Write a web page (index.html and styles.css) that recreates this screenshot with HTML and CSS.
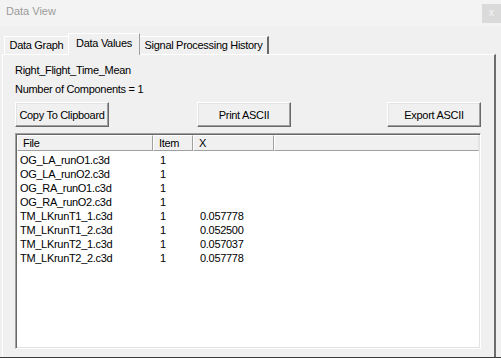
FILE: index.html
```html
<!DOCTYPE html>
<html>

<head>
    <title>Data View</title>
    <link rel="stylesheet" href="styles.css">
</head>

<body>
    <div class="window">
        <div class="titlebar">
            <span class="title">Data View</span>
            <span class="close">x</span>
        </div>

        <div class="tabs">
            <div class="tab tab-graph">Data Graph</div>
            <div class="tab tab-values active">Data Values</div>
            <div class="tab tab-history">Signal Processing History</div>
        </div>

        <div class="panel">
            <div class="label">Right_Flight_Time_Mean</div>
            <div class="label">Number of Components = 1</div>

            <div class="buttons">
                <button class="btn">Copy To Clipboard</button>
                <button class="btn btn-print">Print ASCII</button>
                <button class="btn btn-export">Export ASCII</button>
            </div>

            <div class="list">
                <div class="list-head">
                    <div class="col">File</div>
                    <div class="col">Item</div>
                    <div class="col">X</div>
                    <div class="col col-last"></div>
                </div>
                <div class="list-body">
                    <div class="row"><span>OG_LA_runO1.c3d</span><span>1</span><span></span></div>
                    <div class="row"><span>OG_LA_runO2.c3d</span><span>1</span><span></span></div>
                    <div class="row"><span>OG_RA_runO1.c3d</span><span>1</span><span></span></div>
                    <div class="row"><span>OG_RA_runO2.c3d</span><span>1</span><span></span></div>
                    <div class="row"><span>TM_LKrunT1_1.c3d</span><span>1</span><span>0.057778</span></div>
                    <div class="row"><span>TM_LKrunT1_2.c3d</span><span>1</span><span>0.052500</span></div>
                    <div class="row"><span>TM_LKrunT2_1.c3d</span><span>1</span><span>0.057037</span></div>
                    <div class="row"><span>TM_LKrunT2_2.c3d</span><span>1</span><span>0.057778</span></div>
                </div>
            </div>
        </div>
    </div>
</body>

</html>
```

FILE: styles.css
```css
body {
    margin: 0;
    background-color: #f0f0f0;
    font-family: "Liberation Sans", Arial, sans-serif;
    font-size: 11px;
    color: #000;
}

.window {
    width: 501px;
    height: 358px;
    box-sizing: border-box;
    display: flex;
    flex-direction: column;
    border-bottom: 1px solid #3c3c3c;
    overflow: hidden;
}

.titlebar {
    height: 27px;
    flex-shrink: 0;
    background-color: #f3f3f3;
    display: flex;
    justify-content: space-between;
    align-items: flex-start;
}

.title {
    padding: 5px 0 0 6px;
    color: #9b9b9b;
    font-size: 11px;
}

.close {
    margin-top: 4px;
    width: 19px;
    height: 19px;
    line-height: 17px;
    text-align: center;
    background-color: #dadada;
    color: #f6f6f6;
    font-size: 10px;
}

.tabs {
    height: 27px;
    flex-shrink: 0;
    display: flex;
    align-items: flex-end;
    padding-left: 4px;
    position: relative;
    z-index: 1;
}

.tab {
    box-sizing: border-box;
    height: 18px;
    line-height: 16px;
    text-align: center;
    letter-spacing: -0.3px;
    border-top: 1px solid #fff;
    border-left: 1px solid #fff;
    border-right: 1px solid #a0a0a0;
    margin-bottom: 0;
}

.tab-graph {
    width: 64px;
    border-right: none;
}

.tab-values {
    width: 72px;
}

.tab-history {
    width: 129px;
    border-left: none;
    border-right: 2px solid #696969;
}

.tab.active {
    height: 22px;
    line-height: 18px;
    margin-bottom: -1px;
    background-color: #f0f0f0;
}

.panel {
    flex: 1;
    margin: 0 5px 0 2px;
    padding: 6px 13px 8px 12px;
    border-top: 1px solid #fff;
    border-left: 1px solid #fff;
    border-right: 2px solid #6d6d6d;
    display: flex;
    flex-direction: column;
}

.label {
    line-height: 19px;
    letter-spacing: -0.3px;
}

.buttons {
    display: flex;
    margin-top: 3px;
}

.btn {
    width: 94px;
    height: 25px;
    padding: 0;
    font-family: "Liberation Sans", Arial, sans-serif;
    font-size: 11px;
    letter-spacing: -0.3px;
    color: #000;
    background-color: #f0f0f0;
    border-top: 1px solid #fff;
    border-left: 1px solid #fff;
    border-right: 1px solid #696969;
    border-bottom: 1px solid #696969;
    box-shadow: inset -1px -1px #a0a0a0, inset 1px 1px #e3e3e3;
}

.btn-print {
    margin-left: 88px;
}

.btn-export {
    margin-left: auto;
}

.list {
    flex: 1;
    margin-top: 6px;
    background-color: #fff;
    border-top: 1px solid #a0a0a0;
    border-left: 1px solid #a0a0a0;
    border-right: 1px solid #fff;
    border-bottom: 1px solid #fff;
    box-shadow: inset 1px 1px #696969, inset -1px -1px #e3e3e3;
    padding: 1px 1px 1px 1px;
}

.list-head,
.row {
    display: grid;
    grid-template-columns: 136px 40px 81px 1fr;
}

.list-head {
    height: 16px;
    background-color: #f0f0f0;
}

.col {
    box-sizing: border-box;
    line-height: 14px;
    padding-left: 5px;
    border-left: 1px solid #fff;
    border-right: 1px solid #a0a0a0;
    border-bottom: 1px solid #a0a0a0;
    border-top: 1px solid #fff;
    letter-spacing: -0.3px;
}

.col-last {
    border-right: 1px solid #e3e3e3;
}

.list-body {
    padding-top: 2px;
}

.row {
    height: 14px;
    line-height: 14px;
    letter-spacing: -0.3px;
}

.row span:first-child {
    padding-left: 3px;
}

.row span:nth-child(2),
.row span:nth-child(3) {
    padding-left: 7px;
}
```
